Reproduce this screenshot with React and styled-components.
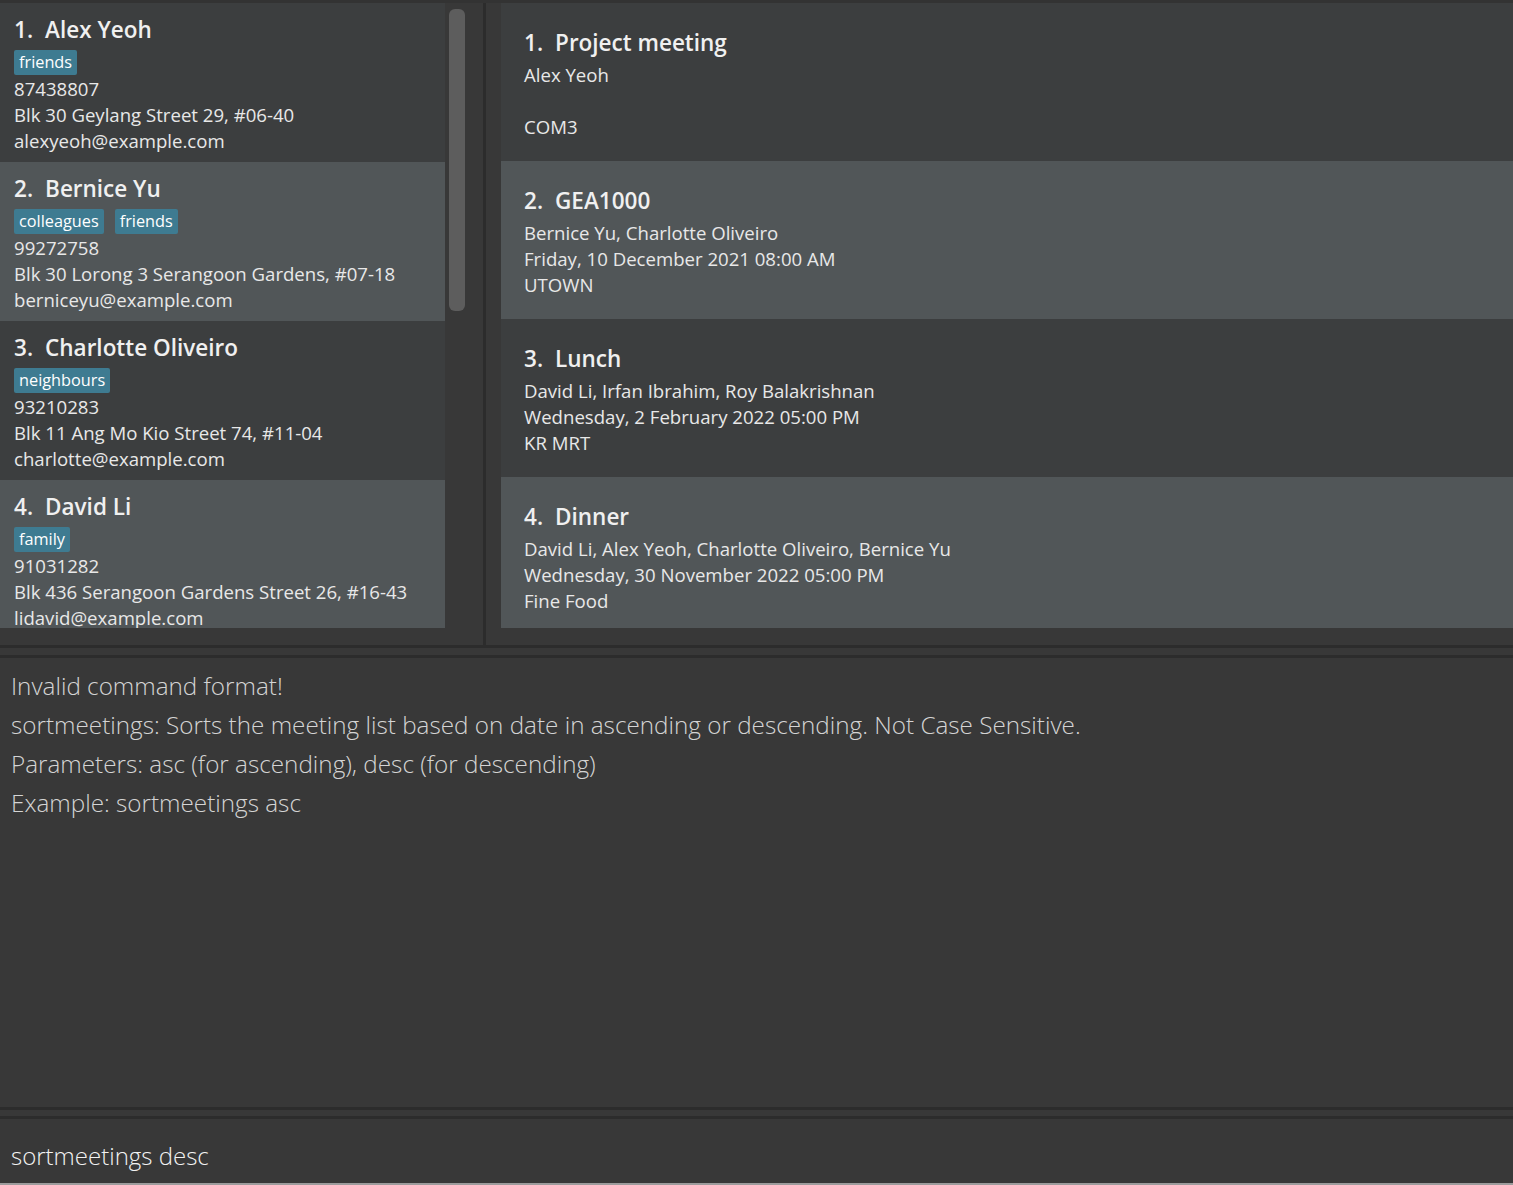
import React from 'react';
import styled, { createGlobalStyle } from 'styled-components';

const GlobalStyle = createGlobalStyle`
  html, body {
    margin: 0;
    padding: 0;
    background: #383838;
  }
  body {
    font-family: "Open Sans", "Noto Sans", sans-serif;
    overflow: hidden;
  }
`;

const Window = styled.div`
  width: 1513px;
  height: 1185px;
  display: flex;
  flex-direction: column;
  background: #383838;
  border-top: 3px solid #333333;
  box-sizing: border-box;
`;

const Lists = styled.div`
  height: 642px;
  display: flex;
  flex-direction: row;
  flex-shrink: 0;
`;

const PersonPane = styled.div`
  width: 483px;
  display: flex;
  flex-direction: row;
`;

const PersonList = styled.div`
  width: 445px;
  height: 625px;
  overflow: hidden;
`;

const ScrollTrack = styled.div`
  width: 38px;
  padding: 6px 0 0 4px;
  box-sizing: border-box;
`;

const ScrollThumb = styled.div`
  width: 16px;
  height: 302px;
  border-radius: 6px;
  background: #5d5d5d;
`;

const VDivider = styled.div`
  width: 3px;
  background: #2c2c2c;
`;

const MeetingPane = styled.div`
  flex: 1;
  padding-left: 15px;
`;

const MeetingList = styled.div`
  height: 625px;
  overflow: hidden;
`;

const Cell = styled.div`
  background: ${p => (p.odd ? '#515658' : '#3c3e3f')};
  box-sizing: border-box;
  color: #ececec;
`;

const PersonCell = styled(Cell)`
  height: 159px;
  padding: 9px 14px 0;
`;

const MeetingCell = styled(Cell)`
  height: 158px;
  padding: 22px 23px 0;
`;

const Title = styled.div`
  font-size: 22.5px;
  font-weight: 600;
  line-height: 35px;
  color: #f0f0f0;
  white-space: nowrap;
`;

const Index = styled.span`
  display: inline-block;
  margin-right: 12px;
`;

const Tags = styled.div`
  display: flex;
  gap: 11px;
  margin: 3px 0 1px;
`;

const Tag = styled.span`
  height: 25px;
  line-height: 25px;
  padding: 0 5px;
  border-radius: 2px;
  background: #3e7b91;
  color: #ffffff;
  font-size: 16.3px;
  font-weight: 500;
`;

const Line = styled.div`
  font-size: 18.6px;
  line-height: 26px;
  height: 26px;
  color: #e8e8e8;
  white-space: nowrap;
`;

const MeetingLines = styled.div`
  margin-top: 2px;
`;

const HLine = styled.div`
  height: 3px;
  background: #2c2c2c;
  flex-shrink: 0;
`;

const Gap = styled.div`
  height: ${p => p.h}px;
  flex-shrink: 0;
`;

const ResultBox = styled.div`
  height: 449px;
  padding: 8px 11px 0;
  box-sizing: border-box;
  flex-shrink: 0;
`;

const ResultLine = styled.div`
  font-size: 24.25px;
  line-height: 39px;
  color: #d4d4d4;
  font-weight: 300;
  white-space: nowrap;
`;

const CommandBox = styled.div`
  flex: 1;
  display: flex;
  align-items: flex-end;
  padding: 0 11px 9px;
`;

const CommandText = styled.div`
  font-size: 24px;
  line-height: 36px;
  color: #f2f2f2;
  font-weight: 300;
`;

const Bottom = styled.div`
  height: 2px;
  background: #9c9c9c;
  flex-shrink: 0;
`;

const persons = [
  { name: 'Alex Yeoh', tags: ['friends'], phone: '87438807', address: 'Blk 30 Geylang Street 29, #06-40', email: 'alexyeoh@example.com' },
  { name: 'Bernice Yu', tags: ['colleagues', 'friends'], phone: '99272758', address: 'Blk 30 Lorong 3 Serangoon Gardens, #07-18', email: 'berniceyu@example.com' },
  { name: 'Charlotte Oliveiro', tags: ['neighbours'], phone: '93210283', address: 'Blk 11 Ang Mo Kio Street 74, #11-04', email: 'charlotte@example.com' },
  { name: 'David Li', tags: ['family'], phone: '91031282', address: 'Blk 436 Serangoon Gardens Street 26, #16-43', email: 'lidavid@example.com' },
];

const meetings = [
  { title: 'Project meeting', people: 'Alex Yeoh', date: '', place: 'COM3' },
  { title: 'GEA1000', people: 'Bernice Yu, Charlotte Oliveiro', date: 'Friday, 10 December 2021 08:00 AM', place: 'UTOWN' },
  { title: 'Lunch', people: 'David Li, Irfan Ibrahim, Roy Balakrishnan', date: 'Wednesday, 2 February 2022 05:00 PM', place: 'KR MRT' },
  { title: 'Dinner', people: 'David Li, Alex Yeoh, Charlotte Oliveiro, Bernice Yu', date: 'Wednesday, 30 November 2022 05:00 PM', place: 'Fine Food' },
];

const result = [
  'Invalid command format!',
  'sortmeetings: Sorts the meeting list based on date in ascending or descending. Not Case Sensitive.',
  'Parameters: asc (for ascending), desc (for descending)',
  'Example: sortmeetings asc',
];

export default function App() {
  return (
    <>
      <GlobalStyle />
      <Window>
        <Lists>
          <PersonPane>
            <PersonList>
              {persons.map((p, i) => (
                <PersonCell key={p.name} odd={i % 2 === 1}>
                  <Title><Index>{i + 1}.</Index>{p.name}</Title>
                  <Tags>
                    {p.tags.map(t => <Tag key={t}>{t}</Tag>)}
                  </Tags>
                  <Line>{p.phone}</Line>
                  <Line>{p.address}</Line>
                  <Line>{p.email}</Line>
                </PersonCell>
              ))}
            </PersonList>
            <ScrollTrack>
              <ScrollThumb />
            </ScrollTrack>
          </PersonPane>
          <VDivider />
          <MeetingPane>
            <MeetingList>
              {meetings.map((m, i) => (
                <MeetingCell key={m.title} odd={i % 2 === 1}>
                  <Title><Index>{i + 1}.</Index>{m.title}</Title>
                  <MeetingLines>
                    <Line>{m.people}</Line>
                    <Line>{m.date}</Line>
                    <Line>{m.place}</Line>
                  </MeetingLines>
                </MeetingCell>
              ))}
            </MeetingList>
          </MeetingPane>
        </Lists>
        <HLine />
        <Gap h={7} />
        <HLine />
        <ResultBox>
          {result.map(r => <ResultLine key={r}>{r}</ResultLine>)}
        </ResultBox>
        <HLine />
        <Gap h={6} />
        <HLine />
        <CommandBox>
          <CommandText>sortmeetings desc</CommandText>
        </CommandBox>
        <Bottom />
      </Window>
    </>
  );
}
